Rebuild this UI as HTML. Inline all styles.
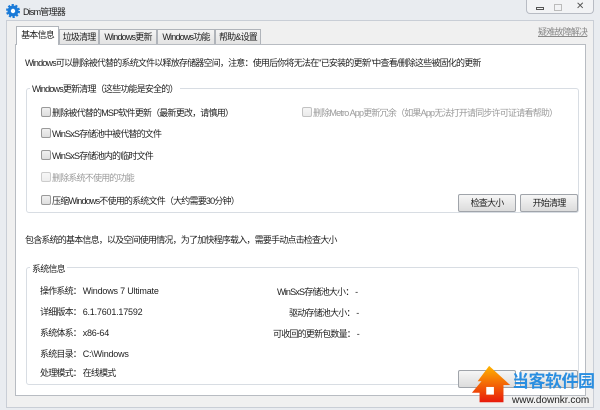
<!DOCTYPE html>
<html><head><meta charset="utf-8"><style>
*{margin:0;padding:0;box-sizing:border-box}
body{width:600px;height:410px;overflow:hidden;background:#e9ecf0;font-family:"Liberation Sans","Noto Sans CJK SC",sans-serif;font-size:9px;letter-spacing:-0.8px;color:#1e1e1e;position:relative}
.a{position:absolute;white-space:nowrap}
.l{letter-spacing:-0.2px}
.win{position:absolute;left:6px;top:20px;width:588px;height:388px;background:#f0f0f0;border:1px solid #c9ced6}
.panel{position:absolute;left:15px;top:44px;width:571px;height:352px;background:#fff;border:1px solid #b8bcc2}
.tab{position:absolute;top:29px;height:16px;border:1px solid #b0b4ba;border-bottom:none;background:linear-gradient(#f4f4f4,#e2e2e2);text-align:center;line-height:14px}
.tab.sel{top:26px;height:19px;background:#fff;z-index:2;line-height:17px}
.grp{position:absolute;border:1px solid #d8dde3;border-radius:3px}
.gl{position:absolute;background:#fff;padding:0 2px}
.cb{position:absolute;width:10px;height:10px;border:1px solid #9a9a9a;border-radius:2px;background:linear-gradient(#f0f0f0,#dedede)}
.btn{position:absolute;height:18px;border:1px solid #a0a4aa;border-radius:2px;background:linear-gradient(#f6f6f6,#dcdcdc);text-align:center;line-height:16px}
.dis{color:#999}
</style></head><body>
<svg class="a" style="left:6px;top:4px" width="14" height="14" viewBox="0 0 14 14"><circle cx="7" cy="7" r="5.5" fill="#1a7ad8" stroke="#1a7ad8" stroke-width="3" stroke-dasharray="2 1.5"/><circle cx="7" cy="7" r="2.2" fill="#fff"/></svg>
<div class="a" style="left:23px;top:5px">Dism管理器</div>
<div class="a" style="left:526px;top:0;width:68px;height:14px;border:1px solid #b8bcc4;border-top:none;border-radius:0 0 4px 4px;background:#f2f3f5"></div>
<div class="a" style="left:536px;top:7px;width:8px;height:3px;border:1px solid #555"></div>
<div class="a" style="left:554px;top:4px;width:8px;height:7px;border:1px solid #bbb"></div>
<div class="a" style="left:576px;top:1px;font-size:10px;color:#555">✕</div>
<div class="win"></div>
<div class="a" style="left:538px;top:25px;color:#888;text-decoration:underline">疑难故障解决</div>
<div class="tab sel" style="left:16px;width:43px">基本信息</div>
<div class="tab" style="left:59px;width:40px">垃圾清理</div>
<div class="tab" style="left:99px;width:58px">Windows更新</div>
<div class="tab" style="left:157px;width:58px">Windows功能</div>
<div class="tab" style="left:215px;width:46px">帮助&amp;设置</div>
<div class="panel"></div>
<div class="a" style="left:25px;top:56px">Windows可以删除被代替的系统文件以释放存储器空间，注意：使用后你将无法在"已安装的更新"中查看/删除这些被固化的更新</div>
<div class="grp" style="left:26px;top:88px;width:553px;height:125px"></div>
<div class="gl a" style="left:30px;top:82px">Windows更新清理（这些功能是安全的）</div>
<div class="cb" style="left:41px;top:107px"></div><div class="a" style="left:52px;top:106px">删除被代替的MSP软件更新（最新更改，请慎用）</div>
<div class="cb" style="left:302px;top:107px;opacity:.6"></div><div class="a dis" style="left:313px;top:106px">删除Metro App更新冗余（如果App无法打开请同步许可证请看帮助）</div>
<div class="cb" style="left:41px;top:128px"></div><div class="a" style="left:52px;top:127px">WinSxS存储池中被代替的文件</div>
<div class="cb" style="left:41px;top:150px"></div><div class="a" style="left:52px;top:149px">WinSxS存储池内的临时文件</div>
<div class="cb" style="left:41px;top:172px;opacity:.5"></div><div class="a dis" style="left:52px;top:171px">删除系统不使用的功能</div>
<div class="cb" style="left:41px;top:195px"></div><div class="a" style="left:52px;top:194px">压缩Windows不使用的系统文件（大约需要30分钟）</div>
<div class="btn" style="left:458px;top:194px;width:58px">检查大小</div>
<div class="btn" style="left:520px;top:194px;width:58px">开始清理</div>
<div class="a" style="left:25px;top:233px">包含系统的基本信息，以及空间使用情况，为了加快程序载入，需要手动点击检查大小</div>
<div class="grp" style="left:26px;top:267px;width:553px;height:118px"></div>
<div class="gl a" style="left:30px;top:262px">系统信息</div>
<div class="a" style="left:40px;top:284px">操作系统：&nbsp;<span class="l">Windows 7 Ultimate</span></div>
<div class="a" style="left:40px;top:305px">详细版本：&nbsp;<span class="l">6.1.7601.17592</span></div>
<div class="a" style="left:40px;top:326px">系统体系：&nbsp;<span class="l">x86-64</span></div>
<div class="a" style="left:40px;top:347px">系统目录：&nbsp;<span class="l">C:\Windows</span></div>
<div class="a" style="left:40px;top:366px">处理模式：&nbsp;在线模式</div>
<div class="a" style="left:277px;top:285px">WinSxS存储池大小：&nbsp;-</div>
<div class="a" style="left:289px;top:306px">驱动存储池大小：&nbsp;-</div>
<div class="a" style="left:273px;top:327px">可收回的更新包数量：&nbsp;-</div>
<div class="btn" style="left:458px;top:370px;width:58px;color:#999">修</div>
<div class="btn" style="left:520px;top:370px;width:58px"></div>
<svg class="a" style="left:470px;top:364px" width="44" height="44" viewBox="0 0 46 46"><defs><linearGradient id="g" x1="0" y1="0" x2="0" y2="1"><stop offset="0" stop-color="#ffb400"/><stop offset="1" stop-color="#e81a0c"/></linearGradient></defs><path d="M20 2 L42 22 L35 22 L35 40 L10 40 L10 30 L2 30 L12 18 L8 18 Z" fill="url(#g)"/><rect x="17" y="24" width="8" height="8" fill="#fff"/></svg>
<div class="a" style="left:512px;top:370px;font-size:17px;font-weight:bold;color:#2a8ee0;letter-spacing:-0.5px;font-family:'Noto Sans CJK SC',sans-serif;line-height:20px">当客软件园</div>
<div class="a" style="left:512px;top:395px;font-size:10px;letter-spacing:0;color:#222">www.downkr.com</div>
</body></html>
